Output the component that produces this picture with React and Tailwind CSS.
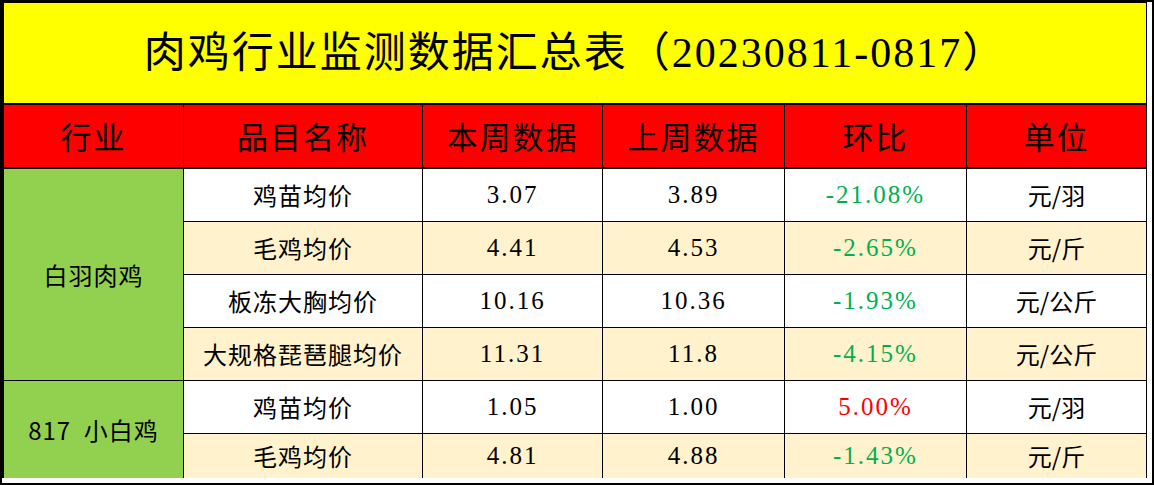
import React from "react";

const headers = ["行业", "品目名称", "本周数据", "上周数据", "环比", "单位"];

const groups = [
  {
    name: "白羽肉鸡",
    span: "row-span-4",
    rows: [
      { item: "鸡苗均价", cur: "3.07", prev: "3.89", change: "-21.08%", up: false, unit: "元/羽" },
      { item: "毛鸡均价", cur: "4.41", prev: "4.53", change: "-2.65%", up: false, unit: "元/斤" },
      { item: "板冻大胸均价", cur: "10.16", prev: "10.36", change: "-1.93%", up: false, unit: "元/公斤" },
      { item: "大规格琵琶腿均价", cur: "11.31", prev: "11.8", change: "-4.15%", up: false, unit: "元/公斤" },
    ],
  },
  {
    name: "817\u00a0\u00a0小白鸡",
    span: "row-span-2",
    rows: [
      { item: "鸡苗均价", cur: "1.05", prev: "1.00", change: "5.00%", up: true, unit: "元/羽" },
      { item: "毛鸡均价", cur: "4.81", prev: "4.88", change: "-1.43%", up: false, unit: "元/斤" },
    ],
  },
];

const cjk = "font-['Noto_Sans_CJK_SC',sans-serif]";
const num = "font-['Liberation_Serif','Noto_Sans_CJK_SC',serif] tracking-[2px]";

const Cell = ({ bg, className = "", children }) => (
  <div className={`flex items-center justify-center ${bg} ${className}`}>{children}</div>
);

const App = () => {
  let rowIndex = 0;
  return (
    <div className="w-[1154px] h-[485px] bg-white border-2 border-black">
      <div className="w-[1145px] border-l-2 border-t border-r border-black">
        <div className="grid grid-cols-[179px_238px_179px_181px_181px_179px] grid-rows-[101px_63px_52px_52px_52px_52px_52px_44px] gap-px bg-black">
          <Cell bg="bg-[#ffff00]" className="col-span-6 border-b border-black">
            <span className="text-[42px] text-black tracking-[2px] font-['Liberation_Serif','Noto_Sans_CJK_SC',serif]">
              肉鸡行业监测数据汇总表（20230811-0817）
            </span>
          </Cell>
          {headers.map((h) => (
            <Cell key={h} bg="bg-[#ff0000]" className="border-b border-black">
              <span className={`text-[31px] text-black tracking-[2px] ${cjk}`}>{h}</span>
            </Cell>
          ))}
          {groups.map((group) =>
            group.rows.map((row, i) => {
              const bg = rowIndex++ % 2 === 0 ? "bg-white" : "bg-[#fff2cc]";
              return (
                <React.Fragment key={group.name + i}>
                  {i === 0 && (
                    <Cell bg="bg-[#92d050]" className={group.span}>
                      <span className={`text-[24px] text-black tracking-[1px] ${cjk}`}>{group.name}</span>
                    </Cell>
                  )}
                  <Cell bg={bg}>
                    <span className={`text-[24px] text-black tracking-[1px] ${cjk}`}>{row.item}</span>
                  </Cell>
                  <Cell bg={bg}>
                    <span className={`text-[25px] text-black ${num}`}>{row.cur}</span>
                  </Cell>
                  <Cell bg={bg}>
                    <span className={`text-[25px] text-black ${num}`}>{row.prev}</span>
                  </Cell>
                  <Cell bg={bg}>
                    <span className={`text-[25px] ${num} ${row.up ? "text-[#ff0000]" : "text-[#00b050]"}`}>
                      {row.change}
                    </span>
                  </Cell>
                  <Cell bg={bg}>
                    <span className={`text-[24px] text-black ${cjk}`}>{row.unit}</span>
                  </Cell>
                </React.Fragment>
              );
            })
          )}
        </div>
      </div>
    </div>
  );
};

export default App;
